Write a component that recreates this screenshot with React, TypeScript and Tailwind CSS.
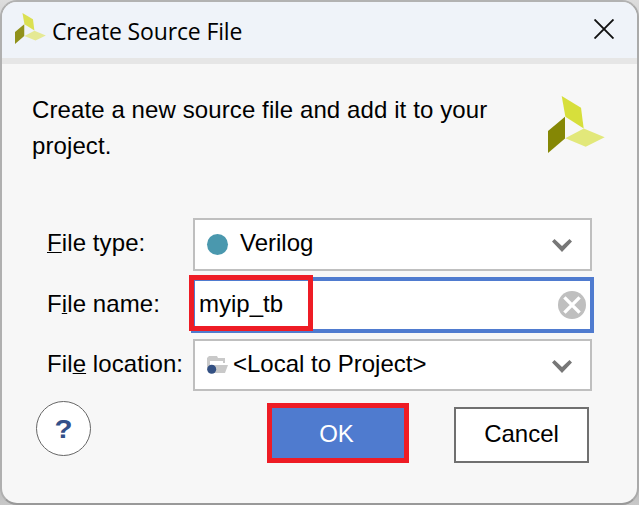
import type { ReactNode } from 'react';

function Logo({ className, muted = false }: { className: string; muted?: boolean }) {
  return (
    <svg viewBox="0 0 57 57" preserveAspectRatio="none" className={className} aria-hidden="true">
      <path d="M13.7 0 33 11.7 35.7 32.4 17.4 20.8Z" fill={muted ? '#dbe052' : '#d7df3b'} />
      <path d="M0 35 17 20.8V42.5L0 57Z" fill={muted ? '#90911a' : '#858705'} />
      <path d="M17.3 42.2 35.8 32.6 56.7 41.2 37.7 50.7Z" fill={muted ? '#e5e994' : '#e2e87a'} />
    </svg>
  );
}

function Chevron() {
  return (
    <svg viewBox="0 0 20 13" className="h-[13px] w-5 shrink-0 translate-y-px" aria-hidden="true">
      <path d="M2.5 0 10 7 17.5 0 20 2.6 10 13 0 2.6Z" fill="#777777" />
    </svg>
  );
}

function SelectBox({ icon, children }: { icon: ReactNode; children: ReactNode }) {
  return (
    <div className="flex w-[399px] items-center border-2 border-[#bfbfbf] bg-white pr-[18px] pl-3">
      {icon}
      <span className="flex-1 -translate-y-px">{children}</span>
      <Chevron />
    </div>
  );
}

function Label({ before = '', mnemonic, after }: { before?: string; mnemonic: string; after: string }) {
  return (
    <div className="w-[146px] shrink-0 self-center whitespace-nowrap pb-[2px] tracking-[0.1px]">
      {before}
      <span className="underline decoration-1 underline-offset-[1px] [text-decoration-skip-ink:none]">{mnemonic}</span>
      {after}
    </div>
  );
}

export default function App() {
  return (
    <div className="h-[505px] w-[639px] overflow-hidden bg-[linear-gradient(to_bottom,#dddddd,#aaaaaa_20%,#999999_85%,#c8c8c8)]">
      <main className="flex h-[505px] w-[639px] flex-col overflow-hidden rounded-[17px] border-2 border-t-[#b2b2b2] border-r-[#aaaaaa] border-b-[#999999] border-l-[#b0b0b0] bg-[#f7f7f7] font-['Liberation_Sans',Arial,sans-serif] text-[24px] leading-[36px] text-black">
        <header className="flex h-[62px] shrink-0 border-b-[6px] border-[#e6e6e6] bg-[#eff3f9] pt-[11px] pr-[23px] pl-[13px]">
          <Logo className="h-[31px] w-[31px] shrink-0" muted />
          <h1 className="ml-[6px] flex-1 font-['Open_Sans','Noto_Sans',sans-serif] text-[23px] leading-[36px] tracking-[-0.15px]">Create Source File</h1>
          <svg viewBox="0 0 20 20" className="mt-[6px] h-5 w-5" aria-label="Close">
            <path d="M.5.5l19 19M19.5.5l-19 19" stroke="#111111" strokeWidth="1.9" />
          </svg>
        </header>
        <section className="flex h-[154px] shrink-0 justify-between pt-[28px] pr-[32px] pl-[30px]">
          <p className="w-[470px] tracking-[0.1px]">Create a new source file and add it to your<br />project.</p>
          <Logo className="mt-[4px] h-[57px] w-[57px]" />
        </section>
        <section className="flex shrink-0 flex-col pl-[45px]">
          <div className="flex h-[53px]">
            <div className="flex pb-[2px]">
              <Label mnemonic="F" after="ile type:" />
            </div>
            <SelectBox icon={<i className="mr-[12px] h-[21px] w-[21px] rounded-full bg-[#4a98ae]" />}>
              <span className="block -translate-y-px">Verilog</span>
            </SelectBox>
          </div>
          <div className="mt-[6px] flex h-[56px]">
            <Label before="F" mnemonic="i" after="le name:" />
            <div className="relative -ml-[2px] flex w-[403px] items-center justify-between border-4 border-[#4f7bcf] bg-white pr-1 pl-1">
              <span className="-translate-y-px">myip_tb</span>
              <svg viewBox="0 0 28 28" className="h-7 w-7" aria-hidden="true">
                <circle cx="14" cy="14" r="14" fill="#bfbfbf" />
                <path d="M6.4 6.4 21.6 21.6M21.6 6.4 6.4 21.6" stroke="white" strokeWidth="3.4" />
              </svg>
              <div className="absolute -top-[6px] -left-[6px] h-[56px] w-[124px] border-[5px] border-[#ee1c25]" />
            </div>
          </div>
          <div className="mt-[6px] flex h-[52px]">
            <Label before="Fil" mnemonic="e" after=" location:" />
            <SelectBox
              icon={
                <svg viewBox="0 0 22 20" className="mr-[4px] h-5 w-[22px] shrink-0" aria-hidden="true">
                  <path d="M0 15V3L2 1h8l1 2h7v5h-2V6H3v6Z" fill="#c9c9c9" />
                  <path d="M5 10h16l-3 8H4Z" fill="#c9c9c9" />
                  <circle cx="4.7" cy="14.2" r="4.5" fill="#335083" />
                </svg>
              }
            >
              &lt;Local to Project&gt;
            </SelectBox>
          </div>
        </section>
        <footer className="flex pt-[10px] pl-[34px]">
          <button className="flex h-[55px] w-[55px] items-center justify-center rounded-full border border-[#666666] bg-white text-[25px] font-bold text-[#335089]">
            <span className="scale-x-[1.18]">?</span>
          </button>
          <button className="mt-[2px] ml-[176px] h-[60px] w-[142px] border-[5px] border-[#ee1c25] bg-[#4f7bcf] pt-[2px] pr-[3px] text-white">OK</button>
          <button className="mt-[6px] ml-[45px] h-[56px] w-[135px] border-2 border-[#707070] bg-white pb-[2px]">Cancel</button>
        </footer>
      </main>
    </div>
  );
}
